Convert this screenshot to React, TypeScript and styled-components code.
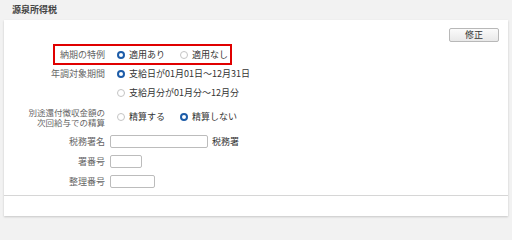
import React from "react";
import styled, { createGlobalStyle } from "styled-components";

const GlobalStyle = createGlobalStyle`
  html, body {
    margin: 0;
    padding: 0;
    background: #f2f2f2;
    font-family: "Noto Sans CJK JP", "Noto Sans", sans-serif;
    font-size: 9px;
    color: #333;
  }
`;

const Page = styled.div`
  width: 512px;
  height: 223px;
  background: #f2f2f2;
`;

const Title = styled.div`
  height: 20px;
  line-height: 20px;
  padding-left: 12px;
  font-weight: bold;
  color: #444;
`;

const Panel = styled.section`
  margin: 0 4px;
  background: #fff;
  box-shadow: 0 1px 2px rgba(0, 0, 0, 0.18);
`;

const Body = styled.div`
  padding-bottom: 4px;
  border-bottom: 1px solid #d6d6d6;
`;

const Toolbar = styled.div`
  display: flex;
  justify-content: flex-end;
  padding: 8px 9px 3px 0;
`;

const EditButton = styled.button`
  width: 50px;
  height: 14px;
  padding: 0;
  border: 1px solid #b8b8b8;
  border-radius: 2px;
  background: linear-gradient(#fbfbfb, #e9e9e9);
  font: inherit;
  font-size: 9px;
  line-height: 12px;
  color: #333;
`;

const Row = styled.div<{ $height: number; $marked?: boolean }>`
  position: relative;
  display: grid;
  grid-template-columns: 101px auto;
  column-gap: 5px;
  align-items: center;
  height: ${(p) => p.$height}px;

  ${(p) =>
    p.$marked &&
    `
    &::after {
      content: "";
      position: absolute;
      left: 49px;
      top: -1px;
      width: 179px;
      height: 21px;
      box-sizing: border-box;
      border: 2px solid #e00000;
      pointer-events: none;
    }
  `}
`;

const Label = styled.div<{ $compact?: boolean }>`
  text-align: right;
  color: #666;
  font-size: ${(p) => (p.$compact ? "8.5px" : "9px")};
  line-height: ${(p) => (p.$compact ? "10px" : "13px")};
  padding-top: ${(p) => (p.$compact ? "1px" : "0")};
`;

const LabelLine = styled.span`
  display: block;
`;

const Options = styled.div`
  display: flex;
  align-items: center;
  gap: 15px;
  padding-left: 7px;
`;

const Option = styled.label<{ $indent?: boolean }>`
  display: inline-flex;
  align-items: center;
  gap: 4px;
  color: #333;
  white-space: nowrap;
  padding-left: ${(p) => (p.$indent ? "7px" : "0")};
`;

const Radio = styled.span<{ $checked?: boolean }>`
  display: inline-block;
  box-sizing: border-box;
  width: 8px;
  height: 8px;
  border-radius: 50%;
  background: #fff;
  border: ${(p) => (p.$checked ? "2.5px solid #1d5ca8" : "1px solid #c4c4c4")};
`;

const Field = styled.div`
  display: flex;
  align-items: center;
  gap: 4px;
`;

const TextBox = styled.input<{ $width: number }>`
  box-sizing: border-box;
  width: ${(p) => p.$width}px;
  height: 13px;
  padding: 0 2px;
  border: 1px solid #bcbcbc;
  border-radius: 2px;
  font: inherit;
  outline: none;
`;

const Footer = styled.div`
  height: 20px;
`;

export default function App() {
  return (
    <>
      <GlobalStyle />
      <Page>
        <Title>源泉所得税</Title>
        <Panel>
          <Body>
            <Toolbar>
              <EditButton>修正</EditButton>
            </Toolbar>

            <Row $height={19} $marked>
              <Label>納期の特例</Label>
              <Options>
                <Option>
                  <Radio $checked />
                  適用あり
                </Option>
                <Option>
                  <Radio />
                  適用なし
                </Option>
              </Options>
            </Row>

            <Row $height={19}>
              <Label>年調対象期間</Label>
              <Option $indent>
                <Radio $checked />
                支給日が01月01日～12月31日
              </Option>
            </Row>

            <Row $height={19}>
              <Label />
              <Option $indent>
                <Radio />
                支給月分が01月分～12月分
              </Option>
            </Row>

            <Row $height={29}>
              <Label $compact>
                <LabelLine>別途還付徴収金額の</LabelLine>
                <LabelLine>次回給与での精算</LabelLine>
              </Label>
              <Options>
                <Option>
                  <Radio />
                  精算する
                </Option>
                <Option>
                  <Radio $checked />
                  精算しない
                </Option>
              </Options>
            </Row>

            <Row $height={20}>
              <Label>税務署名</Label>
              <Field>
                <TextBox $width={98} />
                <span>税務署</span>
              </Field>
            </Row>

            <Row $height={20}>
              <Label>署番号</Label>
              <Field>
                <TextBox $width={32} />
              </Field>
            </Row>

            <Row $height={20}>
              <Label>整理番号</Label>
              <Field>
                <TextBox $width={45} />
              </Field>
            </Row>
          </Body>
          <Footer />
        </Panel>
      </Page>
    </>
  );
}
